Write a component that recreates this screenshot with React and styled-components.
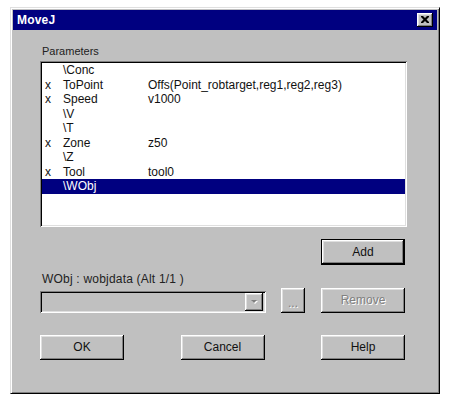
import React from "react";
import styled, { createGlobalStyle } from "styled-components";

const Global = createGlobalStyle`
  html, body { margin: 0; padding: 0; background: #ffffff; }
  body { font-family: "Liberation Sans", Arial, sans-serif; }
  * { box-sizing: border-box; }
`;

const Page = styled.div`
  padding: 7px 0 0 10px;
`;

const Window = styled.div`
  width: 430px;
  height: 387px;
  background: #c0c0c0;
  border: 1px solid;
  border-color: #dfdfdf #000000 #000000 #dfdfdf;
  box-shadow: inset 1px 1px #ffffff, inset -1px -1px #808080;
  padding: 2px;
  display: flex;
  flex-direction: column;
`;

const TitleBar = styled.div`
  height: 20px;
  background: #000080;
  display: flex;
  align-items: center;
  justify-content: space-between;
  padding: 0 4px 0 4px;
`;

const TitleText = styled.span`
  color: #ffffff;
  font-weight: bold;
  font-size: 12px;
  letter-spacing: 0.2px;
`;

const CloseBtn = styled.div`
  width: 16px;
  height: 14px;
  background: #c0c0c0;
  box-shadow: inset -1px -1px #000, inset 1px 1px #fff, inset -2px -2px #808080, inset 2px 2px #dfdfdf;
  display: flex;
  align-items: center;
  justify-content: center;
  padding-bottom: 1px;
`;

const Content = styled.div`
  display: flex;
  flex-direction: column;
  padding: 0 30px 0 27px;
`;

const Label = styled.div`
  font-size: ${(p) => p.$size || 11}px;
  line-height: ${(p) => p.$lh || 13}px;
  letter-spacing: ${(p) => p.$ls || 0}px;
  color: #222222;
  margin-top: ${(p) => p.$mt || 0}px;
  margin-left: 2px;
  white-space: pre;
`;

const ListBox = styled.div`
  margin-top: 3px;
  height: 166px;
  background: #ffffff;
  box-shadow: inset 1px 1px #808080, inset -1px -1px #ffffff, inset 2px 2px #000000, inset -2px -2px #dfdfdf;
  padding: 2px;
`;

const Row = styled.div`
  display: grid;
  grid-template-columns: 18px 85px 1fr;
  padding-left: 3px;
  height: 14.5px;
  line-height: 14.5px;
  font-size: 12px;
  white-space: pre;
  color: ${(p) => (p.$selected ? "#ffffff" : "#111111")};
  background: ${(p) => (p.$selected ? "#000080" : "transparent")};
`;

const ButtonRow = styled.div`
  display: flex;
  align-items: ${(p) => p.$align || "center"};
  justify-content: ${(p) => p.$justify || "space-between"};
  margin-top: ${(p) => p.$mt || 0}px;
  margin-right: 2px;
  height: ${(p) => p.$h || 25}px;
`;

const Button = styled.div`
  width: ${(p) => p.$w || 84}px;
  height: ${(p) => p.$h || 25}px;
  background: #c0c0c0;
  border: ${(p) => (p.$default ? "1px solid #000" : "none")};
  box-shadow: inset -1px -1px #000, inset 1px 1px #fff, inset -2px -2px #808080, inset 2px 2px #dfdfdf;
  display: flex;
  align-items: ${(p) => p.$textAlign || "center"};
  justify-content: center;
  font-size: 12px;
  color: ${(p) => (p.$disabled ? "#808080" : "#111")};
  text-shadow: ${(p) => (p.$disabled ? "1px 1px 0 #ffffff" : "none")};
  padding-bottom: ${(p) => p.$pb || 1}px;
`;

const Combo = styled.div`
  width: 226px;
  height: 22px;
  background: #c0c0c0;
  box-shadow: inset 1px 1px #808080, inset -1px -1px #ffffff, inset 2px 2px #000000, inset -2px -2px #dfdfdf;
  padding: 2px 3px 2px 2px;
  display: flex;
  justify-content: flex-end;
`;

const ComboArrow = styled.div`
  width: 18px;
  height: 18px;
  background: #c0c0c0;
  box-shadow: inset -1px -1px #000, inset 1px 1px #fff, inset -2px -2px #808080, inset 2px 2px #dfdfdf;
  display: flex;
  align-items: center;
  justify-content: center;
`;

const Right = styled.div`
  display: flex;
  align-items: flex-end;
  gap: 16px;
`;

const rows = [
  ["", "\\Conc", ""],
  ["x", "ToPoint", "Offs(Point_robtarget,reg1,reg2,reg3)"],
  ["x", "Speed", "v1000"],
  ["", "\\V", ""],
  ["", "\\T", ""],
  ["x", "Zone", "z50"],
  ["", "\\Z", ""],
  ["x", "Tool", "tool0"],
  ["", "\\WObj", ""],
];

export default function App() {
  return (
    <>
      <Global />
      <Page>
        <Window>
          <TitleBar>
            <TitleText>MoveJ</TitleText>
            <CloseBtn>
              <svg width="8" height="7" viewBox="0 0 8 7">
                <path d="M0 0h2l2 2 2-2h2v1L5.5 3.5 8 6v1H6L4 5 2 7H0V6l2.5-2.5L0 1z" fill="#000" />
              </svg>
            </CloseBtn>
          </TitleBar>
          <Content>
            <Label $mt={15}>Parameters</Label>
            <ListBox>
              {rows.map((r, i) => (
                <Row key={i} $selected={i === rows.length - 1}>
                  <span>{r[0]}</span>
                  <span>{r[1]}</span>
                  <span>{r[2]}</span>
                </Row>
              ))}
            </ListBox>
            <ButtonRow $justify="flex-end" $mt={12} $h={26}>
              <Button $default $h={26}>Add</Button>
            </ButtonRow>
            <Label $size={12} $lh={14} $mt={7} $ls={0.2}>
              {"WObj : wobjdata (Alt 1/1 )"}
            </Label>
            <ButtonRow $mt={2} $align="flex-end">
              <Combo>
                <ComboArrow>
                  <svg width="9" height="6" viewBox="0 0 9 6">
                    <path d="M2 2h6L5 5z" fill="#ffffff" />
                    <path d="M1 1h6L4 4z" fill="#808080" />
                  </svg>
                </ComboArrow>
              </Combo>
              <Right>
                <Button $w={24} $disabled $textAlign="flex-end" $pb={3}>...</Button>
                <Button $disabled>Remove</Button>
              </Right>
            </ButtonRow>
            <ButtonRow $mt={22}>
              <Button>OK</Button>
              <Button>Cancel</Button>
              <Button>Help</Button>
            </ButtonRow>
          </Content>
        </Window>
      </Page>
    </>
  );
}
